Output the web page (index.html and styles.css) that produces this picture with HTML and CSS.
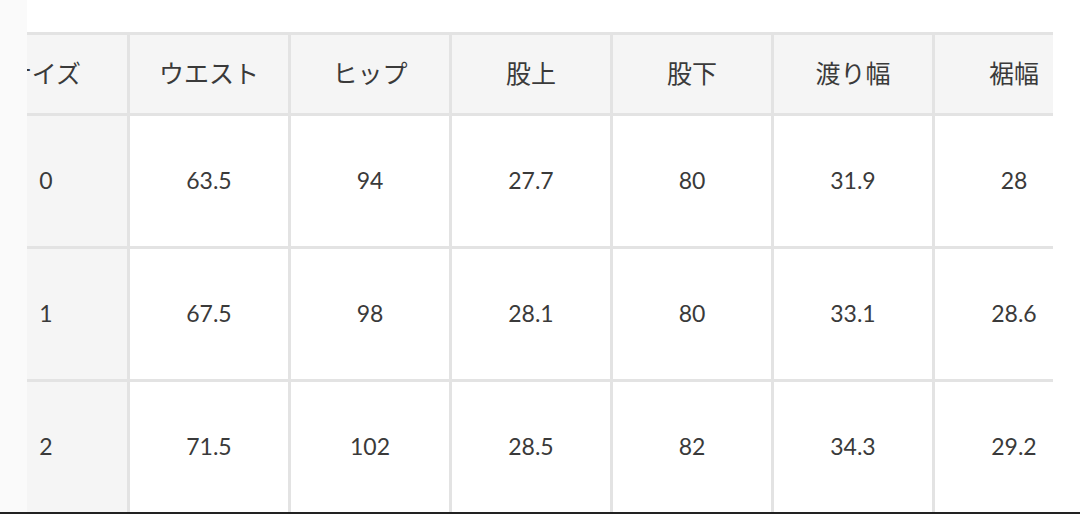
FILE: index.html
```html
<!DOCTYPE html>
<html lang="ja">
<head>
<meta charset="utf-8">
<link rel="stylesheet" href="styles.css">
</head>
<body>
<div class="page">
  <div class="main">
    <div class="strip"></div>
    <div class="scroller">
      <div class="table">
        <div class="cell head head-label">サイズ</div>
        <div class="cell head">ウエスト</div>
        <div class="cell head">ヒップ</div>
        <div class="cell head">股上</div>
        <div class="cell head">股下</div>
        <div class="cell head">渡り幅</div>
        <div class="cell head">裾幅</div>

        <div class="cell label">0</div>
        <div class="cell">63.5</div>
        <div class="cell">94</div>
        <div class="cell">27.7</div>
        <div class="cell">80</div>
        <div class="cell">31.9</div>
        <div class="cell">28</div>

        <div class="cell label">1</div>
        <div class="cell">67.5</div>
        <div class="cell">98</div>
        <div class="cell">28.1</div>
        <div class="cell">80</div>
        <div class="cell">33.1</div>
        <div class="cell">28.6</div>

        <div class="cell label">2</div>
        <div class="cell">71.5</div>
        <div class="cell">102</div>
        <div class="cell">28.5</div>
        <div class="cell">82</div>
        <div class="cell">34.3</div>
        <div class="cell">29.2</div>
      </div>
    </div>
  </div>
  <div class="bottom-line"></div>
</div>
</body>
</html>
```

FILE: styles.css
```css
html, body {
  margin: 0;
  padding: 0;
  background: #ffffff;
}

.page {
  width: 1080px;
  height: 514px;
  display: flex;
  flex-direction: column;
  overflow: hidden;
}

.main {
  flex: 1;
  display: flex;
  min-height: 0;
}

.strip {
  width: 27px;
  flex: none;
  background: #fafafa;
}

.scroller {
  width: 1026px;
  flex: none;
  overflow: hidden;
  padding-top: 32px;
}

.table {
  display: grid;
  grid-template-columns: repeat(7, 158px);
  grid-template-rows: 78px 130px 130px 130px;
  gap: 3px;
  width: 1124px;
  margin-left: -58px;
  background: #e3e3e3;
  border-top: 3px solid #e3e3e3;
}

.cell {
  display: flex;
  align-items: center;
  justify-content: center;
  background: #ffffff;
  color: #3a3a3a;
  font-family: Lato, "Noto Sans CJK JP", sans-serif;
  font-size: 23px;
  padding-bottom: 2px;
}

.head {
  background: #f5f5f5;
  font-family: "Noto Sans CJK JP", sans-serif;
  font-size: 25px;
  padding-bottom: 5px;
}

.head-label {
  padding-right: 8px;
}

.label {
  background: #f5f5f5;
  padding-right: 4px;
}

.bottom-line {
  height: 2px;
  flex: none;
  background: #222222;
}
```
